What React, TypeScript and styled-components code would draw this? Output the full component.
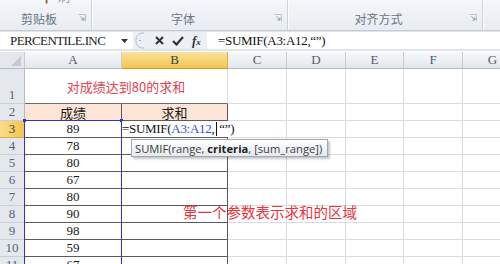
import React from "react";
import styled, { createGlobalStyle } from "styled-components";

const serif = `"Liberation Serif", "DejaVu Serif", "Noto Sans CJK SC", serif`;
const cjk = `"Noto Sans CJK SC", sans-serif`;

const GlobalStyle = createGlobalStyle`
  body {
    margin: 0;
    background: #fff;
    overflow: hidden;
  }
`;

const columns = ["A", "B", "C", "D", "E", "F", "G"];
const colWidths = [97, 106, 59, 59, 58, 59, 60];
const scores = ["89", "78", "80", "67", "80", "90", "98", "59", "67"];

const ribbonGroups = [
    {label: "剪贴板", width: 92},
    {label: "字体", width: 196},
    {label: "对齐方式", width: 195},
    {label: "", width: 40},
]

function Launcher() {
    return (
        <svg width="8" height="8" viewBox="0 0 8 8">
            <path d="M0.5 0.5 H7.5 V7.5" fill="none" stroke="#b9c1cb"/>
            <path d="M2.5 2.5 L6 6 M6 3.5 V6 H3.5" fill="none" stroke="#8a96a4"/>
        </svg>
    )
}

function App() {
    return (
        <Page>
            <GlobalStyle/>
            <Ribbon>
                {ribbonGroups.map((g, i) => (
                    <Group key={i} $w={g.width}>
                        <GroupTop>
                            {i === 0 && <PainterButton>
                                <svg width="12" height="14" viewBox="0 0 12 14">
                                    <path d="M1 3 L6 0 L11 3 L6 6 Z" fill="#9aa4b0"/>
                                    <path d="M5 6 V13" stroke="#8a6a3a" strokeWidth="2"/>
                                </svg>
                                <span>格式刷</span>
                            </PainterButton>}
                        </GroupTop>
                        <GroupFoot>
                            <GroupLabel>{g.label}</GroupLabel>
                            {g.label && <Launcher/>}
                        </GroupFoot>
                    </Group>
                ))}
            </Ribbon>

            <FormulaBar>
                <NameBox>
                    <span>PERCENTILE.INC</span>
                    <svg width="7" height="4" viewBox="0 0 7 4">
                        <path d="M0 0 H7 L3.5 4 Z" fill="#333"/>
                    </svg>
                </NameBox>
                <Grip>
                    <svg width="10" height="17" viewBox="0 0 10 17">
                        <path d="M9 1 C3 1 1 4 1 8.5 C1 13 3 16 9 16" fill="none" stroke="#b5bdc7"/>
                        <path d="M4 8.5 H6" stroke="#9ea7b2"/>
                    </svg>
                </Grip>
                <BarButtons>
                    <svg width="9" height="9" viewBox="0 0 9 9">
                        <path d="M1 1 L8 8 M8 1 L1 8" stroke="#333" strokeWidth="2"/>
                    </svg>
                    <svg width="12" height="10" viewBox="0 0 12 10">
                        <path d="M1 5 L4.5 8.5 L11 1" fill="none" stroke="#333" strokeWidth="2.2"/>
                    </svg>
                    <Fx>f<sub>x</sub></Fx>
                </BarButtons>
                <FormulaInput>=SUMIF(A3:A12,“”)</FormulaInput>
            </FormulaBar>

            <Sheet>
                <Corner>
                    <svg width="10" height="10" viewBox="0 0 10 10">
                        <path d="M10 0 V10 H0 Z" fill="#c3c9d1"/>
                    </svg>
                </Corner>
                {columns.map((c, i) => (
                    <ColHead key={c} $active={c === "B"} style={{width: colWidths[i]}}>{c}</ColHead>
                ))}

                <RowHead $bottom>1</RowHead>
                <Cell $span={2} $color="#e2434f" $bottomLine="#6b6b6b" $cjk>对成绩达到80的求和</Cell>
                {columns.slice(2).map(c => <Cell key={c}/>)}

                <RowHead>2</RowHead>
                <Cell $bg="#fce4d6" $rightLine="#5b5b5b" $bottomLine="#5b5b5b" $cjk>成绩</Cell>
                <Cell $bg="#fce4d6" $rightLine="#5b5b5b" $bottomLine="#5b5b5b" $cjk>求和</Cell>
                {columns.slice(2).map(c => <Cell key={c}/>)}

                {scores.map((s, r) => (
                    <React.Fragment key={r}>
                        <RowHead $active={r === 0}>{r + 3}</RowHead>
                        <Cell $rightLine="#5b5b5b" $bottomLine="#5b5b5b">{s}</Cell>
                        {r === 0 ? (
                            <EditCell $rightLine="#5b5b5b" $bottomLine="#5b5b5b">
                                <EditText>
                                    =SUMIF(<RefText>A3:A12</RefText>,<Caret/>“”)
                                </EditText>
                            </EditCell>
                        ) : (
                            <Cell $rightLine="#5b5b5b" $bottomLine="#5b5b5b"/>
                        )}
                        {columns.slice(2).map(c => <Cell key={c}/>)}
                    </React.Fragment>
                ))}

                <RangeOutline>
                    <Handle $side="left"/>
                    <Handle $side="right"/>
                </RangeOutline>

                <Tip>SUMIF(range, <b>criteria</b>, [sum_range])</Tip>
                <Note>第一个参数表示求和的区域</Note>
            </Sheet>
        </Page>
    );
}

const Page = styled.div`
  width: 500px;
  height: 264px;
  overflow: hidden;
  background: #fff;
`

const Ribbon = styled.div`
  display: flex;
  height: 30px;
  background: linear-gradient(#f4f6f9, #e8ecf1);
  border-bottom: 1px solid #c5ccd5;
  overflow: hidden;
`

const Group = styled.div<{ $w: number }>`
  width: ${p => p.$w}px;
  flex-shrink: 0;
  display: flex;
  flex-direction: column;
  border-right: 1px solid #cdd3db;
  box-shadow: 1px 0 0 #fafbfc;
  box-sizing: border-box;
`

const GroupTop = styled.div`
  height: 8px;
  overflow: hidden;
  position: relative;
`

const PainterButton = styled.div`
  display: flex;
  align-items: flex-end;
  gap: 5px;
  margin: -11px 0 0 42px;
  height: 16px;
  font: 12px ${cjk};
  color: #8d97a3;
  line-height: 16px;
`

const GroupFoot = styled.div`
  flex: 1;
  display: flex;
  align-items: center;
  padding: 0 5px 2px 0;
`

const GroupLabel = styled.div`
  flex: 1;
  text-align: center;
  font: 12px ${cjk};
  color: #6a7584;
`

const FormulaBar = styled.div`
  display: flex;
  height: 17px;
  padding: 1px 0 2px;
  background: #dfe4ea;
`

const NameBox = styled.div`
  width: 133px;
  box-sizing: border-box;
  display: flex;
  align-items: center;
  justify-content: space-between;
  padding: 0 5px 0 10px;
  background: #fff;
  font: 13px ${serif};
  letter-spacing: -0.6px;
  color: #222;
`

const Grip = styled.div`
  width: 20px;
  display: flex;
  align-items: center;
  padding-left: 2px;
  background: #eceff3;
`

const BarButtons = styled.div`
  width: 52px;
  display: flex;
  align-items: center;
  gap: 8px;
  background: #eceff3;
`

const Fx = styled.span`
  font: italic bold 13px ${serif};
  color: #333;
  line-height: 1;

  sub {
    font-size: 9px;
    vertical-align: baseline;
  }
`

const FormulaInput = styled.div`
  flex: 1;
  display: flex;
  align-items: center;
  padding-left: 11px;
  background: #fff;
  font: 13px ${serif};
  letter-spacing: -0.3px;
  color: #111;
`

const Sheet = styled.div`
  position: relative;
  display: grid;
  grid-template-columns: 25px ${colWidths.map(w => w + "px").join(" ")};
  grid-template-rows: 17px 35px repeat(10, 17px);
  margin-top: 1px;
`

const Corner = styled.div`
  display: flex;
  align-items: flex-end;
  justify-content: flex-end;
  padding: 0 3px 2px 0;
  background: #e4e8ed;
  border-right: 1px solid #c6ccd4;
  border-bottom: 1px solid #b3bbc5;
`

const ColHead = styled.div<{ $active?: boolean }>`
  box-sizing: border-box;
  display: flex;
  align-items: center;
  justify-content: center;
  font: 13px ${serif};
  color: ${p => p.$active ? "#3b3b3b" : "#4f5d6e"};
  background: ${p => p.$active
    ? "linear-gradient(#fae29c, #f3c54f)"
    : "linear-gradient(#f7f8fa, #e3e7ec)"};
  border-right: 1px solid ${p => p.$active ? "#dcae3e" : "#c6ccd4"};
  border-bottom: 1px solid ${p => p.$active ? "#d29a26" : "#b3bbc5"};
`

const RowHead = styled.div<{ $active?: boolean; $bottom?: boolean }>`
  display: flex;
  justify-content: center;
  align-items: ${p => p.$bottom ? "flex-end" : "center"};
  font: 13px ${serif};
  color: ${p => p.$active ? "#3b3b3b" : "#566478"};
  background: ${p => p.$active ? "linear-gradient(90deg, #f9dc8c, #f3c54f)" : "#e4e8ed"};
  border-right: 1px solid ${p => p.$active ? "#d29a26" : "#b3bbc5"};
  border-bottom: 1px solid ${p => p.$active ? "#dcae3e" : "#c9cfd7"};
`

const Cell = styled.div<{
    $span?: number;
    $bg?: string;
    $color?: string;
    $rightLine?: string;
    $bottomLine?: string;
    $cjk?: boolean;
}>`
  grid-column: span ${p => p.$span || 1};
  display: flex;
  align-items: center;
  justify-content: center;
  overflow: hidden;
  white-space: nowrap;
  background: ${p => p.$bg || "#fff"};
  color: ${p => p.$color || "#1a1a1a"};
  font: 13px ${p => p.$cjk ? cjk : serif};
  border-right: 1px solid ${p => p.$rightLine || "#dadcdf"};
  border-bottom: 1px solid ${p => p.$bottomLine || "#dadcdf"};
`

const EditCell = styled(Cell)`
  justify-content: flex-start;
  overflow: visible;
  position: relative;
  z-index: 2;
`

const EditText = styled.span`
  display: flex;
  align-items: center;
  height: 100%;
  padding-right: 3px;
  background: #fff;
  font: 13px ${serif};
  letter-spacing: -0.3px;
  color: #111;
`

const RefText = styled.span`
  color: #2f4fd0;
`

const Caret = styled.span`
  display: inline-block;
  width: 1px;
  height: 14px;
  margin: 0 2px;
  background: #111;
`

const RangeOutline = styled.div`
  position: absolute;
  left: 24px;
  top: 68px;
  width: 98px;
  height: 200px;
  box-sizing: border-box;
  border: 1px solid #3434c4;
  pointer-events: none;
  z-index: 1;
`

const Handle = styled.div<{ $side: "left" | "right" }>`
  position: absolute;
  top: -2px;
  ${p => p.$side}: -2px;
  width: 3px;
  height: 3px;
  background: #3434c4;
`

const Tip = styled.div`
  position: absolute;
  left: 131px;
  top: 87px;
  z-index: 3;
  height: 18px;
  box-sizing: border-box;
  display: flex;
  align-items: center;
  padding: 0 5px 0 3px;
  background: linear-gradient(#ffffff, #e6e9ee);
  border: 1px solid #9ea8b5;
  box-shadow: 2px 2px 2px rgba(0, 0, 0, 0.22);
  font: 11.2px "Open Sans", "Noto Sans", sans-serif;
  color: #3d3d3d;
  white-space: pre;

  b {
    font-weight: 700;
    color: #222;
  }
`

const Note = styled.div`
  position: absolute;
  left: 183px;
  top: 153px;
  z-index: 2;
  font: 14.5px ${cjk};
  line-height: 1;
  color: #e8343e;
`

export default App;
